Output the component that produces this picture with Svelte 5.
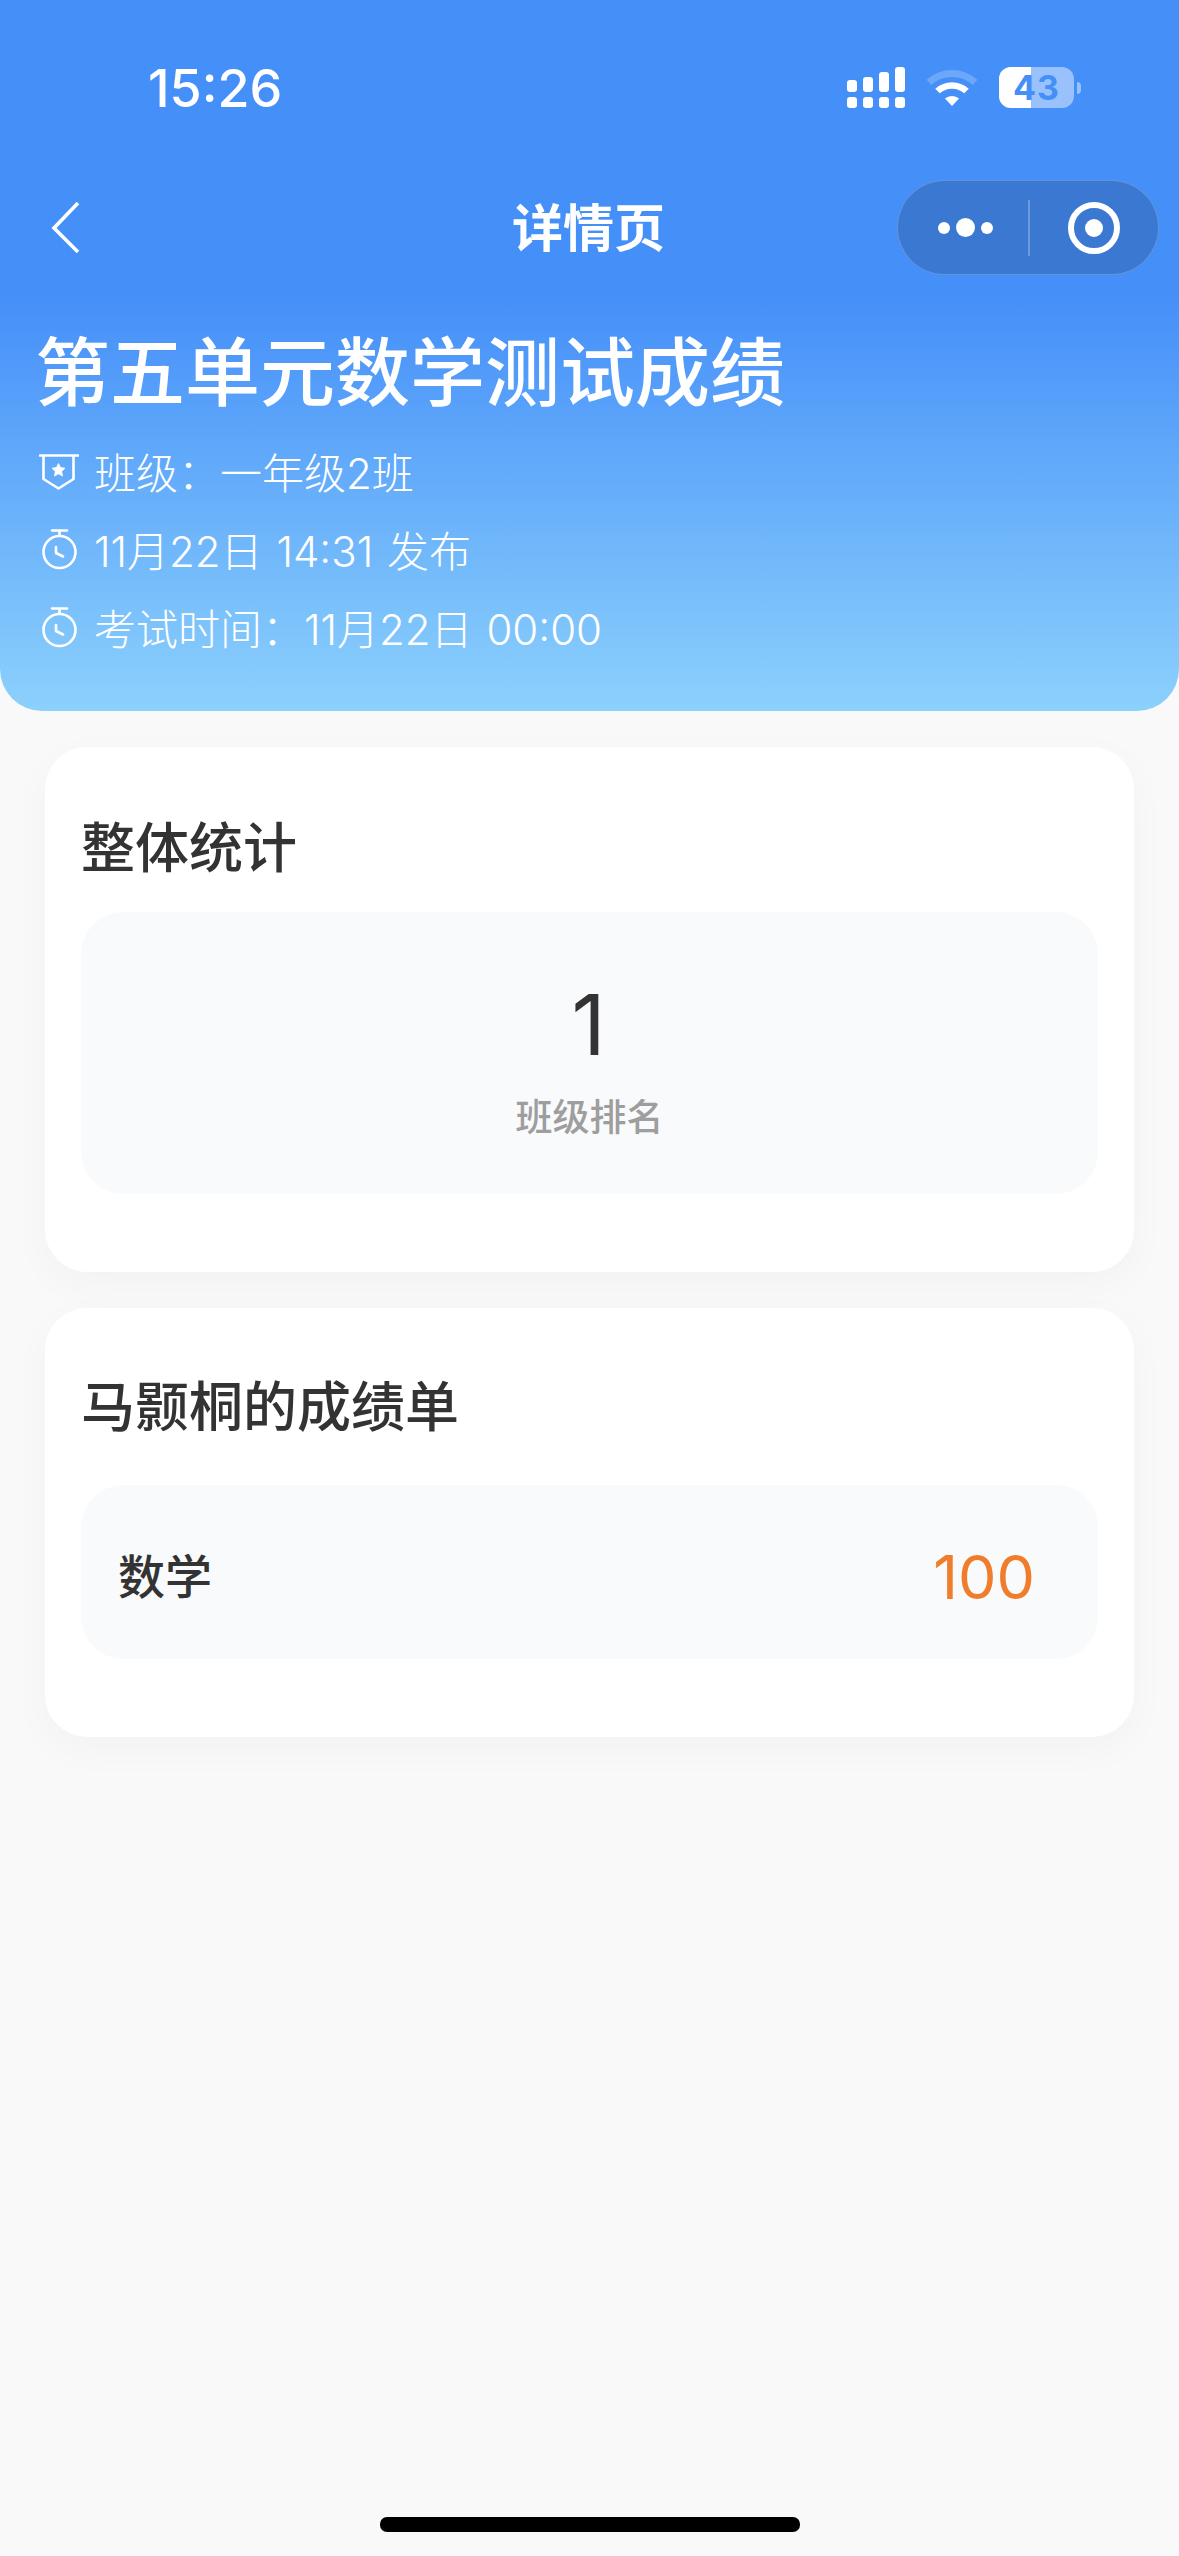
<script>
  const metas = [
    { icon: 'badge', text: '班级\uFF1A一年级2班' },
    { icon: 'clock', text: '11月22日 14:31 发布' },
    { icon: 'clock', text: '考试时间\uFF1A11月22日 00:00' }
  ];
  const bars = [12, 15, 20, 25];
</script>

<div class="page">
  <header class="hero">
    <div class="status">
      <span class="time">15:26</span>
      <div class="indicators">
        <div class="signal">
          {#each bars as h}
            <div class="col">
              <i style="height:{h}px"></i>
              <i class="dot"></i>
            </div>
          {/each}
        </div>
        <svg class="wifi" width="50" height="38" viewBox="0 0 50 38" aria-hidden="true">
          <path d="M2 13.5C15 1.500 35 1.500 48 13.500" fill="none" stroke="#fff" stroke-opacity=".22" stroke-width="7"/>
          <path d="M10.500 22C18.500 14.500 31.500 14.500 39.500 22" fill="none" stroke="#fff" stroke-width="6.500"/>
          <path d="M18 29.500C22 26 28 26 32 29.500L25 37Z" fill="#fff"/>
        </svg>
        <div class="battery">
          <div class="cell"><span class="level"></span><span class="pct">43</span></div>
          <span class="nub"></span>
        </div>
      </div>
    </div>

    <nav class="nav">
      <svg class="back" width="30" height="54" viewBox="0 0 30 54" aria-hidden="true">
        <path d="M27 2L3 27L27 51" fill="none" stroke="#fff" stroke-width="3.600"/>
      </svg>
      <h2>详情页</h2>
      <div class="capsule">
        <div class="more"><i></i><i class="big"></i><i></i></div>
        <span class="divider"></span>
        <div class="target"><i></i></div>
      </div>
    </nav>

    <h1>第五单元数学测试成绩</h1>
    {#each metas as m}
      <div class="meta">
        {#if m.icon === 'badge'}
          <svg width="40" height="46" viewBox="0 0 40 46" aria-hidden="true">
            <path d="M1 4.500H39M4.500 4.500V28L19.500 37.500L34.500 28V4.500" fill="none" stroke="#fff" stroke-width="2.600" stroke-linejoin="round" stroke-linecap="round"/>
            <path d="M19.500 12.500L21.500 16.500L26 17.200L22.700 20.400L23.500 25L19.500 22.800L15.500 25L16.300 20.400L13 17.200L17.500 16.500Z" fill="#fff" stroke="#fff" stroke-width=".8" stroke-linejoin="round"/>
          </svg>
        {:else}
          <svg width="40" height="46" viewBox="0 0 40 46" aria-hidden="true">
            <path d="M13 1.500H28M20.500 1.500V6" fill="none" stroke="#fff" stroke-width="2.600" stroke-linecap="round"/>
            <circle cx="20.500" cy="23" r="16" fill="none" stroke="#fff" stroke-width="2.600"/>
            <path d="M17 18V24L24 27.500" fill="none" stroke="#fff" stroke-width="2.600" stroke-linecap="round" stroke-linejoin="round"/>
          </svg>
        {/if}
        <span>{m.text}</span>
      </div>
    {/each}
  </header>

  <main class="content">
    <section class="card stats">
      <h3>整体统计</h3>
      <div class="panel rank">
        <div class="num">1</div>
        <div class="label">班级排名</div>
      </div>
    </section>

    <section class="card report">
      <h3>马颢桐的成绩单</h3>
      <div class="panel score">
        <span class="subject">数学</span>
        <span class="value">100</span>
      </div>
    </section>
  </main>

  <div class="home"><span></span></div>
</div>

<style>
  :global(body) {
    margin: 0;
    background: #f9f9f9;
  }
  .page {
    width: 1179px;
    height: 2556px;
    display: flex;
    flex-direction: column;
    overflow: hidden;
    font-family: Inter, "Noto Sans CJK SC", sans-serif;
    color: #333;
  }
  .hero {
    height: 711px;
    box-sizing: border-box;
    border-radius: 0 0 42px 42px;
    background: linear-gradient(180deg, #458ff9 0, #458ff9 296px, #8cd1fc 100%);
    color: #fff;
    flex: none;
  }
  .status {
    height: 160px;
    box-sizing: border-box;
    padding: 66px 98px 0 148px;
    display: flex;
    justify-content: space-between;
    align-items: flex-start;
  }
  .time {
    font-size: 52px;
    line-height: 42px;
    font-weight: 500;
    padding-top: 2px;
  }
  .indicators {
    display: flex;
    align-items: flex-start;
    gap: 22px;
    padding-top: 1px;
  }
  .signal {
    display: flex;
    gap: 5.500px;
    height: 41px;
    margin-left: -1px;
  }
  .col {
    width: 10.500px;
    display: flex;
    flex-direction: column;
    justify-content: flex-end;
    gap: 5px;
  }
  .col i {
    display: block;
    background: #fff;
    border-radius: 3px;
  }
  .col i.dot {
    height: 11px;
  }
  .wifi {
    margin-top: 2px;
  }
  .battery {
    display: flex;
    align-items: center;
    gap: 3px;
  }
  .cell {
    position: relative;
    width: 75px;
    height: 41px;
    border-radius: 12px;
    overflow: hidden;
    background: rgba(255, 255, 255, 0.45);
    display: flex;
    align-items: center;
    justify-content: center;
  }
  .level {
    position: absolute;
    inset: 0 43px 0 0;
    background: #fff;
  }
  .pct {
    position: relative;
    font-size: 34px;
    font-weight: 700;
    color: #458ff9;
    letter-spacing: 1px;
  }
  .nub {
    width: 4px;
    height: 12px;
    border-radius: 0 6px 6px 0;
    background: rgba(255, 255, 255, 0.45);
  }
  .nav {
    position: relative;
    height: 136px;
    display: flex;
    align-items: center;
    justify-content: space-between;
    padding: 0 20px 0 51px;
  }
  .nav h2 {
    position: absolute;
    left: 0;
    right: 2px;
    margin: 0;
    padding-top: 2px;
    text-align: center;
    font-size: 51px;
    font-weight: 700;
    line-height: 70px;
  }
  .capsule {
    width: 262px;
    height: 95px;
    box-sizing: border-box;
    border: 1.500px solid rgba(255, 255, 255, 0.2);
    border-radius: 48px;
    background: #3b78d2;
    display: flex;
    align-items: center;
    margin-top: -1px;
  }
  .more {
    width: 130px;
    padding-left: 4px;
    box-sizing: border-box;
    display: flex;
    align-items: center;
    justify-content: center;
    gap: 6px;
  }
  .more i {
    width: 12px;
    height: 12px;
    border-radius: 50%;
    background: #fff;
  }
  .more i.big {
    width: 19px;
    height: 19px;
  }
  .divider {
    width: 1.500px;
    height: 56px;
    background: rgba(255, 255, 255, 0.25);
  }
  .target {
    display: flex;
    justify-content: center;
    box-sizing: border-box;
    flex: none;
    width: 52px;
    height: 52px;
    margin-left: 38px;
    border: 6px solid #fff;
    border-radius: 50%;
    align-items: center;
  }
  .target i {
    width: 18px;
    height: 18px;
    border-radius: 50%;
    background: #fff;
  }
  .hero h1 {
    margin: 27px 0 12px;
    padding-left: 35px;
    font-size: 75px;
    line-height: 100px;
    font-weight: 500;
  }
  .meta {
    height: 78px;
    display: flex;
    align-items: center;
    gap: 15px;
    padding-left: 39px;
    font-size: 42px;
    font-weight: 300;
    word-spacing: 2px;
  }
  .meta span {
    line-height: 78px;
  }
  .content {
    padding: 36px 45px 0;
    display: flex;
    flex-direction: column;
    gap: 36px;
  }
  .card {
    padding: 0 36px 78px;
    background: #fff;
    border-radius: 42px;
    box-shadow: 0 12px 40px rgba(0, 0, 0, 0.03);
  }
  .card h3 {
    margin: 0;
    font-size: 54px;
    line-height: 76px;
    font-weight: 500;
    color: #333;
  }
  .stats h3 {
    padding: 64px 0 25px;
  }
  .report h3 {
    padding: 62px 0 39px;
  }
  .panel {
    background: #f9fafb;
    border-radius: 42px;
  }
  .rank {
    height: 282px;
    box-sizing: border-box;
    padding-top: 63px;
    text-align: center;
  }
  .num {
    font-size: 84px;
    line-height: 100px;
    font-weight: 400;
    color: #333;
    margin-right: 2px;
  }
  .label {
    margin-top: 18px;
    font-size: 37px;
    line-height: 50px;
    font-weight: 500;
    color: #9e9e9e;
  }
  .score {
    height: 174px;
    box-sizing: border-box;
    padding: 6px 63px 0 37px;
    display: flex;
    align-items: center;
    justify-content: space-between;
  }
  .subject {
    font-size: 47px;
    font-weight: 500;
    color: #333;
    margin-top: -3px;
  }
  .value {
    font-size: 61px;
    font-weight: 400;
    color: #f07d2c;
    margin-top: 3px;
  }
  .home {
    margin-top: auto;
    height: 39px;
    display: flex;
    justify-content: center;
    align-items: flex-start;
  }
  .home span {
    width: 420px;
    height: 15px;
    border-radius: 7px;
    background: #000;
  }
</style>
